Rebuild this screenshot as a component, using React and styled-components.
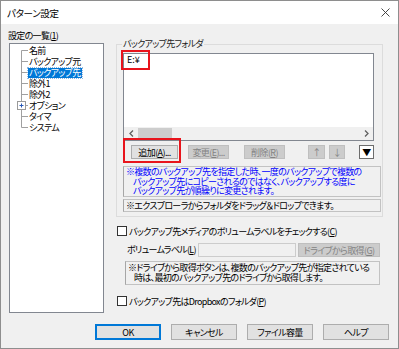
import React from 'react';
import styled, { createGlobalStyle, css } from 'styled-components';

const FONT = `"Noto Sans CJK JP", "Noto Sans", sans-serif`;

const Global = createGlobalStyle`
  html, body { margin: 0; padding: 0; background: #ffffff; }
  body { font-family: ${FONT}; }
  * { box-sizing: border-box; }
`;

const Window = styled.div`
  position: relative;
  width: 399px;
  height: 349px;
  border: 1px solid #8e8e8e;
  display: flex;
  flex-direction: column;
  background: #f0f0f0;
  font-family: ${FONT};
  font-size: 9px;
  font-feature-settings: "palt";
  letter-spacing: -0.7px;
  color: #000;
  overflow: hidden;
`;

const TitleBar = styled.div`
  flex: none;
  height: 23px;
  background: #ffffff;
  display: flex;
  align-items: center;
  justify-content: space-between;
  padding: 0 8px 0 6px;
  font-size: 9.5px;
  letter-spacing: -0.3px;
`;

const Body = styled.div`
  flex: 1;
  display: flex;
  flex-direction: column;
  padding: 7px 9px 8px 7px;
`;

const Main = styled.div`
  display: flex;
  align-items: flex-start;
`;

const LeftCol = styled.div`
  display: flex;
  flex-direction: column;
`;

const Label = styled.div`
  line-height: 10px;
  height: 10px;
  white-space: nowrap;
  margin-left: ${p => p.$ml || 0}px;
  width: ${p => (p.$w ? `${p.$w}px` : 'auto')};
  flex: none;
`;

const TreeBox = styled.div`
  margin: 2px 0 0 1px;
  width: 95px;
  height: 270px;
  background: #ffffff;
  border: 1px solid #828790;
  padding-top: 1px;
  display: flex;
  flex-direction: column;
`;

const TreeRow = styled.div`
  height: 11px;
  display: flex;
  align-items: center;
`;

const TreeText = styled.span`
  line-height: 10px;
  padding: 0 1px;
  white-space: nowrap;
  ${p => p.$selected && css`
    background: #0078d7;
    color: #ffffff;
    outline: 1px dotted #8fb8e0;
  `}
`;

const RightCol = styled.div`
  margin-left: 12px;
  display: flex;
  flex-direction: column;
`;

const Group = styled.fieldset`
  margin: 8px 0 0 0;
  width: 267px;
  border: 1px solid #dcdcdc;
  padding: 4px 0 4px 6px;
  min-inline-size: 0;
`;

const Legend = styled.legend`
  padding: 0 1px;
  margin-left: -1px;
  line-height: 10px;
  color: #222;
`;

const ListBox = styled.div`
  width: 251px;
  height: 88px;
  border: 1px solid #828790;
  background: #ffffff;
  display: flex;
  flex-direction: column;
`;

const ListItems = styled.div`
  flex: 1;
  padding-left: 3px;
  line-height: 11px;
  letter-spacing: 0;
`;

const HScroll = styled.div`
  flex: none;
  height: 13px;
  background: #f0f0f0;
  display: flex;
  align-items: center;
`;

const ScrollArrow = styled.div`
  width: 14px;
  height: 13px;
  display: flex;
  align-items: center;
  justify-content: center;
`;

const Thumb = styled.div`
  width: 34px;
  height: 11px;
  background: #cdcdcd;
`;

const ScrollTrack = styled.div`
  flex: 1;
`;

const ButtonRow = styled.div`
  display: flex;
  margin-top: ${p => p.$mt || 0}px;
  padding-left: ${p => p.$pl || 0}px;
  justify-content: ${p => p.$end ? 'flex-end' : 'flex-start'};
  gap: ${p => p.$gap || 0}px;
`;

const variants = {
  normal: css`
    background: #e1e1e1;
    border: 1px solid #adadad;
    color: #000;
  `,
  disabled: css`
    background: #cccccc;
    border: 1px solid #bfbfbf;
    color: #838383;
  `,
  default: css`
    background: #e1e1e1;
    border: 2px solid #0078d7;
    color: #000;
  `,
  white: css`
    background: #ffffff;
    border: 1px solid #6d6d6d;
    color: #000;
  `,
};

const Btn = styled.button`
  flex: none;
  width: ${p => p.$w}px;
  height: ${p => p.$h || 14}px;
  margin-left: ${p => p.$ml || 0}px;
  padding: 0;
  font-family: ${FONT};
  font-size: 9px;
  font-feature-settings: "palt";
  letter-spacing: -0.6px;
  line-height: 1;
  display: flex;
  align-items: center;
  justify-content: center;
  white-space: nowrap;
  ${p => variants[p.$variant || 'normal']}
`;

const Note = styled.div`
  margin-top: ${p => p.$mt || 0}px;
  margin-left: ${p => p.$ml || 0}px;
  width: ${p => p.$w}px;
  border: 1px solid #c2c2c2;
  border-left-color: #a6a6a6;
  padding: ${p => p.$pad || '0 2px'};
  color: ${p => p.$blue ? '#0000ff' : '#000'};
`;

const NoteLine = styled.div`
  line-height: ${p => p.$lh || 10}px;
  white-space: nowrap;
  padding-left: ${p => p.$indent || 0}px;
`;

const CheckRow = styled.label`
  display: flex;
  align-items: center;
  height: 12px;
  margin-top: ${p => p.$mt || 0}px;
  white-space: nowrap;
`;

const CheckBox = styled.span`
  width: 10px;
  height: 10px;
  margin: 0 2px 0 1px;
  border: 1px solid #333333;
  background: #ffffff;
  flex: none;
`;

const FieldRow = styled.div`
  display: flex;
  align-items: center;
  height: 14px;
  margin-top: 6px;
`;

const TextInput = styled.div`
  width: 98px;
  height: 14px;
  border: 1px solid #cccccc;
  background: #f0f0f0;
  flex: none;
`;

const Annot = styled.div`
  position: absolute;
  left: ${p => p.$x}px;
  top: ${p => p.$y}px;
  width: ${p => p.$w}px;
  height: ${p => p.$h}px;
  border: 2px solid #e8141c;
  pointer-events: none;
`;

const Connector = ({ first, last, plus }) => (
  <svg width="18" height="11" viewBox="0 0 18 11" style={{ flex: 'none', display: 'block' }}>
    <line x1="11.5" y1={first ? 5.5 : 0} x2="11.5" y2={last ? 5.5 : 11} stroke="#a0a0a0" strokeWidth="1" />
    <line x1={plus ? 15.5 : 11.5} y1="5.5" x2="18" y2="5.5" stroke="#a0a0a0" strokeWidth="1" />
    {plus && (
      <g>
        <rect x="7.5" y="1.5" width="8" height="8" fill="#ffffff" stroke="#9a9a9a" />
        <line x1="9.5" y1="5.5" x2="13.5" y2="5.5" stroke="#2a5ab8" />
        <line x1="11.5" y1="3.5" x2="11.5" y2="7.5" stroke="#2a5ab8" />
      </g>
    )}
  </svg>
);

const Chevron = ({ dir }) => (
  <svg width="5" height="7" viewBox="0 0 5 7">
    <polyline
      points={dir === 'left' ? '4,0.5 1,3.5 4,6.5' : '1,0.5 4,3.5 1,6.5'}
      fill="none"
      stroke="#606060"
      strokeWidth="1.3"
    />
  </svg>
);

const CloseIcon = () => (
  <svg width="9" height="9" viewBox="0 0 9 9">
    <line x1="0.5" y1="0.5" x2="8.5" y2="8.5" stroke="#333" strokeWidth="0.9" />
    <line x1="8.5" y1="0.5" x2="0.5" y2="8.5" stroke="#333" strokeWidth="0.9" />
  </svg>
);

const treeItems = ['名前', 'バックアップ元', 'バックアップ先', '除外1', '除外2', 'オプション', 'タイマ', 'システム'];

export default function App() {
  return (
    <>
      <Global />
      <Window>
        <TitleBar>
          <span>パターン設定</span>
          <CloseIcon />
        </TitleBar>
        <Body>
          <Main>
            <LeftCol>
              <Label>設定の一覧(<u>1</u>)</Label>
              <TreeBox>
                {treeItems.map((t, i) => (
                  <TreeRow key={t}>
                    <Connector first={i === 0} last={i === treeItems.length - 1} plus={t === 'オプション'} />
                    <TreeText $selected={t === 'バックアップ先'}>{t}</TreeText>
                  </TreeRow>
                ))}
              </TreeBox>
            </LeftCol>
            <RightCol>
              <Group>
                <Legend>バックアップ先フォルダ</Legend>
                <ListBox>
                  <ListItems>E:¥</ListItems>
                  <HScroll>
                    <ScrollArrow><Chevron dir="left" /></ScrollArrow>
                    <Thumb />
                    <ScrollTrack />
                    <ScrollArrow><Chevron dir="right" /></ScrollArrow>
                  </HScroll>
                </ListBox>
                <ButtonRow $mt={4} $pl={8}>
                  <Btn $w={47}>追加(<u>A</u>)...</Btn>
                  <Btn $w={41} $ml={10} $variant="disabled">変更(<u>E</u>)...</Btn>
                  <Btn $w={41} $ml={15} $variant="disabled">削除(<u>R</u>)</Btn>
                  <Btn $w={17} $ml={23} $variant="disabled">↑</Btn>
                  <Btn $w={16} $ml={4} $variant="disabled">↓</Btn>
                  <Btn $w={15} $ml={14} $variant="white">▼</Btn>
                </ButtonRow>
                <Note $mt={7} $w={258} $blue>
                  <NoteLine $lh={9.7}>※複数のバックアップ先を指定した時、一度のバックアップで複数の</NoteLine>
                  <NoteLine $lh={9.7} $indent={7}>バックアップ先にコピーされるのではなく、バックアップする度に</NoteLine>
                  <NoteLine $lh={9.7} $indent={7}>バックアップ先が順繰りに変更されます。</NoteLine>
                </Note>
                <Note $mt={2} $w={258}>
                  <NoteLine $lh={11}>※エクスプローラからフォルダをドラッグ＆ドロップできます。</NoteLine>
                </Note>
              </Group>
              <CheckRow $mt={8}>
                <CheckBox />
                <span>バックアップ先メディアのボリュームラベルをチェックする(<u>C</u>)</span>
              </CheckRow>
              <FieldRow>
                <Label $ml={11} $w={71}>ボリュームラベル(<u>L</u>)</Label>
                <TextInput />
                <Btn $w={82} $ml={2} $variant="disabled">ドライブから取得(<u>G</u>)</Btn>
              </FieldRow>
              <Note $mt={4} $ml={9} $w={255} $pad="1px 2px">
                <NoteLine>※ドライブから取得ボタンは、複数のバックアップ先が指定されている</NoteLine>
                <NoteLine $indent={6}>時は、最初のバックアップ先のドライブから取得します。</NoteLine>
              </Note>
              <CheckRow $mt={10}>
                <CheckBox />
                <span>バックアップ先はDropboxのフォルダ(<u>P</u>)</span>
              </CheckRow>
            </RightCol>
          </Main>
          <ButtonRow $end $gap={10} style={{ marginTop: 'auto' }}>
            <Btn $w={66} $h={16} $variant="default">OK</Btn>
            <Btn $w={66} $h={16}>キャンセル</Btn>
            <Btn $w={66} $h={16}>ファイル容量</Btn>
            <Btn $w={66} $h={16}>ヘルプ</Btn>
          </ButtonRow>
        </Body>
        <Annot $x={120} $y={49} $w={29} $h={20} />
        <Annot $x={122} $y={137} $w={58} $h={25} />
      </Window>
    </>
  );
}
